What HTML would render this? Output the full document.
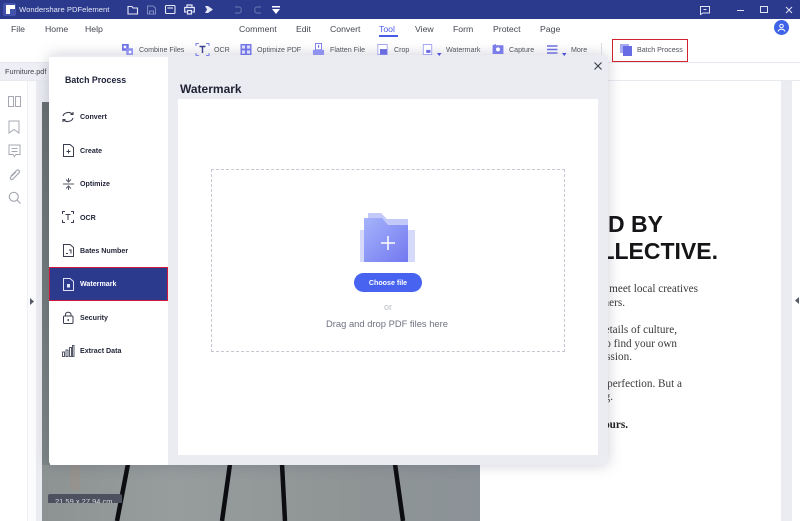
<!DOCTYPE html>
<html><head><meta charset="utf-8">
<style>
*{box-sizing:border-box}
html,body{margin:0;padding:0}
html{background:#fff}
body{width:800px;height:521px;overflow:hidden;position:relative;background:#fff;font-family:"Liberation Sans",sans-serif;color:#33363f;filter:blur(.25px)}
.a{position:absolute}
.t{position:absolute;white-space:nowrap;line-height:1;font-size:7.1px;color:#50535e}
.m{font-size:8.7px;color:#444751}
.s{position:absolute;left:80px;font-size:7.1px;font-weight:bold;color:#23263a;white-space:nowrap;line-height:1}
.h{font-weight:bold;font-size:23px;color:#151518;position:absolute;white-space:nowrap;line-height:1}
.p{font-family:"Liberation Serif",serif;font-size:11.2px;color:#3a3a3c;position:absolute;white-space:nowrap;line-height:1}
svg{position:absolute;overflow:visible}
</style></head><body>

<!-- background -->
<div class="a" style="left:0;top:80px;width:800px;height:441px;background:#fff"></div>
<div class="a" style="left:27px;top:80px;width:9px;height:441px;background:#fbfbfd;border-left:1px solid #eef0f4"></div>
<div class="a" style="left:36px;top:80px;width:6px;height:441px;background:#ebecf2"></div>
<div class="a" style="left:42px;top:102px;width:8px;height:363px;background:linear-gradient(#687070,#7d8585)"></div>
<div class="a" style="left:42px;top:80px;width:8px;height:22px;background:#ebecf2"></div>
<div class="a" style="left:781px;top:80px;width:11px;height:441px;background:#ebecf2"></div>

<!-- bottom photo -->
<div class="a" style="left:42px;top:465px;width:438px;height:56px;background:linear-gradient(90deg,#8d9292,#979d9d 30%,#8f9595 70%,#8b9298);overflow:hidden">
<svg width="438" height="56" style="left:0;top:0"><g stroke="#0c0d10" stroke-width="4.500" fill="none"><path d="M86 -1L75 56"/><path d="M188 -1L180 56"/><path d="M240 -1L243 56"/><path d="M353 -1L361 56"/></g><rect x="28" y="0" width="10" height="25" fill="#9b8f86" opacity=".5"/></svg>
</div>
<div class="a" style="left:48px;top:494px;width:74px;height:9px;background:#4d505f;border-radius:2px 2px 0 0;overflow:hidden"><span class="t" style="left:7px;top:4px;color:#d9dae0;font-size:7.5px">21.59 x 27.94 cm</span></div>

<!-- right page text (clipped under the modal edge) -->
<div class="h" style="right:137px;top:213px">D BY</div>
<div class="h" style="right:82px;top:240px">COLLECTIVE.</div>
<div class="p" style="right:102px;top:283.500px">tour, meet local creatives</div>
<div class="p" style="right:175px;top:297.500px">partners.</div>
<div class="p" style="right:123px;top:324.500px">the details of culture,</div>
<div class="p" style="right:123px;top:338.500px">and to find your own</div>
<div class="p" style="right:168px;top:351.500px">expression.</div>
<div class="p" style="right:118px;top:378.500px">for perfection. But a</div>
<div class="p" style="right:187px;top:392px">ing.</div>
<div class="p" style="right:172px;top:420px;font-weight:bold;color:#222">yours.</div>

<!-- handles -->
<svg style="left:30px;top:298px" width="5" height="7"><path d="M0 0L4 3.500L0 7z" fill="#555a66"/></svg>
<svg style="left:795px;top:297px" width="5" height="7"><path d="M4 0L0 3.500L4 7z" fill="#555a66"/></svg>

<!-- left rail icons -->
<svg style="left:8px;top:96px" width="14" height="12" fill="none" stroke="#a5a8b2"><rect x=".5" y=".5" width="5" height="10"/><rect x="7.500" y=".5" width="5" height="10"/></svg>
<svg style="left:8px;top:120px" width="13" height="14" fill="none" stroke="#a5a8b2"><path d="M1 1H11V13L6 9.500L1 13Z"/></svg>
<svg style="left:8px;top:144px" width="13" height="14" fill="none" stroke="#a5a8b2"><path d="M1 1H12V10.500H8L6.500 12.500L5 10.500H1Z"/><path d="M3.500 4.500H9.500M3.500 7.500H9.500"/></svg>
<svg style="left:8px;top:168px" width="13" height="14" fill="none" stroke="#a5a8b2" stroke-width="1.200"><path d="M3 8L8.500 2.500C10 1 12.500 3 11 4.800L5 11C3.500 12.500 1.300 10.500 2.800 9L8 3.800"/></svg>
<svg style="left:8px;top:191px" width="13" height="14" fill="none" stroke="#a5a8b2" stroke-width="1.200"><circle cx="5.800" cy="5.800" r="4.500"/><path d="M9 9L12.500 12.500"/></svg>

<!-- title bar -->
<div class="a" style="left:0;top:0;width:800px;height:18.500px;background:#2c3a8e"></div>
<div class="a" style="left:3px;top:3px;width:13px;height:13px;background:#4353ab;border-radius:2px"></div>
<svg style="left:5.500px;top:5px" width="9" height="9"><path d="M0 0H9V4H4V9H0Z" fill="#fff"/></svg>
<div class="t" style="left:19px;top:5.500px;color:#e4e7f5;font-size:7.650px">Wondershare PDFelement</div>
<svg style="left:127px;top:5px" width="12" height="10" fill="none" stroke="#e4e7f5" stroke-width="1.100"><path d="M1 1.500H5L6 3H10.500V9H1Z"/></svg>
<svg style="left:147px;top:5px" width="9" height="10" fill="none" stroke="#7f8ac2"><path d="M.5 1H6L8.500 3V9H.5Z"/><path d="M2.500 9V6H6.500V9"/></svg>
<svg style="left:165px;top:5px" width="11" height="9" fill="none" stroke="#e4e7f5" stroke-width="1.100"><rect x=".5" y=".5" width="9.500" height="8" rx="1"/><path d="M2.500 3H8"/></svg>
<svg style="left:184px;top:4px" width="11" height="11" fill="none" stroke="#e4e7f5" stroke-width="1.200"><path d="M3 3V1H8V3M2.500 8H.7V3.500H10.300V8H8.500"/><rect x="3.500" y="6.500" width="4" height="3.500"/></svg>
<svg style="left:205px;top:6px" width="8" height="8" fill="#e4e7f5"><path d="M0 0L3 0L8 3.500L3 7H0L2 3.500Z"/></svg>
<svg style="left:234px;top:6px" width="8" height="8" fill="none" stroke="#6a76b5"><path d="M1 1H5C8 1 8 7 5 7H1"/></svg>
<svg style="left:254px;top:6px" width="8" height="8" fill="none" stroke="#6a76b5"><path d="M7 1H3C0 1 0 7 3 7H7"/></svg>
<svg style="left:272px;top:6px" width="8" height="8" fill="#fff"><rect x="0" y="0" width="8" height="1.500"/><path d="M0 3H8L4 8Z"/></svg>
<svg style="left:700px;top:6px" width="10" height="9" fill="none" stroke="#dfe3f2"><path d="M.5 .5H9.500V7H3L.5 8.500Z"/><path d="M3.500 3.500H6.500"/></svg>
<div class="a" style="left:737px;top:9.500px;width:7px;height:1px;background:#dfe3f2"></div>
<div class="a" style="left:760px;top:6px;width:8px;height:7px;border:1px solid #dfe3f2"></div>
<svg style="left:784.500px;top:6px" width="8" height="8" stroke="#dfe3f2"><path d="M1 1L7 7M7 1L1 7"/></svg>

<!-- menu -->
<div class="t m" style="left:11px;top:25px">File</div>
<div class="t m" style="left:45px;top:25px">Home</div>
<div class="t m" style="left:85px;top:25px">Help</div>
<div class="t m" style="left:239px;top:25px">Comment</div>
<div class="t m" style="left:296px;top:25px">Edit</div>
<div class="t m" style="left:330px;top:25px">Convert</div>
<div class="t m" style="left:379px;top:25px;color:#4a5be8">Tool</div>
<div class="a" style="left:379px;top:35px;width:19px;height:1.500px;background:#4a5be8"></div>
<div class="t m" style="left:415px;top:25px">View</div>
<div class="t m" style="left:453px;top:25px">Form</div>
<div class="t m" style="left:493px;top:25px">Protect</div>
<div class="t m" style="left:540px;top:25px">Page</div>
<div class="a" style="left:774px;top:20px;width:15px;height:15px;border-radius:50%;background:#3f63e6"></div>
<svg style="left:777px;top:23px" width="9" height="9" fill="none" stroke="#fff"><circle cx="4.500" cy="3" r="1.800"/><path d="M1 8.500C2 5.500 7 5.500 8 8.500"/></svg>

<!-- tab bar -->
<div class="a" style="left:0;top:62px;width:800px;height:1px;background:#e6e7ee"></div>
<div class="a" style="left:0;top:63px;width:49px;height:18px;background:#eeeff4"></div>
<div class="a" style="left:0;top:80px;width:800px;height:1px;background:#e9eaf0"></div>
<div class="t" style="left:5px;top:68px;font-size:7.300px;color:#41444e">Furniture.pdf</div>

<!-- modal -->
<div class="a" style="left:49px;top:55px;width:559px;height:410px;background:#ebecf2;border-radius:4px;box-shadow:0 0 14px rgba(60,65,90,.25);overflow:hidden">
  <div class="a" style="left:0;top:1.500px;width:119px;height:409px;background:#fff"></div>
</div>

<!-- toolbar (painted above the modal edge) -->
<svg style="left:122px;top:44px" width="11" height="11" viewBox="0 0 13 13"><rect x="0" y="0" width="8" height="8" fill="#7073e6"/><rect x="5" y="5" width="8" height="8" fill="#8f92ee"/><rect x="2" y="2" width="3" height="3" fill="#fff"/><rect x="8" y="8" width="3" height="3" fill="#fff"/></svg>
<div class="t" style="left:139px;top:47px">Combine Files</div>
<svg style="left:196px;top:43px" width="13" height="13" fill="none" stroke="#8084ea" stroke-width="1.100"><path d="M0 3V.500H3M10 .500H13V3M0 10V12.500H3M10 12.500H13V10"/><path d="M3.500 3.500H9.500M6.500 3.500V10" stroke="#3b3f90" stroke-width="1.400"/></svg>
<div class="t" style="left:214px;top:47px">OCR</div>
<svg style="left:240px;top:44px" width="12" height="11" viewBox="0 0 12 12"><rect width="12" height="12" fill="#7073e6"/><g fill="#dcdcfa"><rect x="1.500" y="1.500" width="3.500" height="3.500"/><rect x="7" y="1.500" width="3.500" height="3.500"/><rect x="1.500" y="7" width="3.500" height="3.500"/><rect x="7" y="7" width="3.500" height="3.500"/></g></svg>
<div class="t" style="left:257px;top:47px">Optimize PDF</div>
<svg style="left:312px;top:43px" width="13" height="12" viewBox="0 0 13 14"><path d="M3 .500H10V8H3Z" fill="#fff" stroke="#7073e6"/><rect x="6" y="2.500" width="1.200" height="3" fill="#5058d8"/><rect x="0" y="8" width="13" height="6" fill="#8f92ee"/></svg>
<div class="t" style="left:330px;top:47px">Flatten File</div>
<svg style="left:377px;top:44px" width="11" height="11" viewBox="0 0 12 13"><path d="M.5 .500H11.500V12.500H.5Z" fill="#fff" stroke="#9a9df0"/><rect x="3" y="6" width="8.500" height="6.500" fill="#6a6de0"/></svg>
<div class="t" style="left:394px;top:47px">Crop</div>
<svg style="left:422px;top:44px" width="11" height="11" viewBox="0 0 11 13"><path d="M.5 .500H10.500V12.500H.5Z" fill="#fff" stroke="#9a9df0"/><rect x="4" y="7" width="5" height="3.500" fill="#6a6de0"/></svg>
<svg style="left:437px;top:53px" width="5" height="3"><path d="M0 0H4.500L2.250 3Z" fill="#4a50d8"/></svg>
<div class="t" style="left:446px;top:47px">Watermark</div>
<svg style="left:492px;top:44px" width="12" height="10" viewBox="0 0 13 12"><path d="M0 1.500L4 0V1.500H13V12H0Z" fill="#7a7de8"/><circle cx="6.500" cy="6.500" r="2.400" fill="#fff"/></svg>
<div class="t" style="left:509px;top:47px">Capture</div>
<svg style="left:547px;top:45px" width="11" height="9" fill="none" stroke="#6a6fe0" stroke-width="1.500"><path d="M0 1H10.500M0 4.500H10.500M0 8H10.500"/></svg>
<svg style="left:562px;top:53px" width="5" height="3"><path d="M0 0H4.500L2.250 3Z" fill="#4a50d8"/></svg>
<div class="t" style="left:571px;top:47px">More</div>
<div class="a" style="left:601px;top:43px;width:1px;height:12px;background:#d9dbe3"></div>
<div class="a" style="left:612px;top:39px;width:76px;height:23px;border:1.500px solid #d1232e"></div>
<svg style="left:620px;top:44px" width="12" height="12"><rect x="0" y="0" width="9" height="9" fill="#a9abf0"/><rect x="3" y="2" width="9" height="10" fill="#686ce4"/></svg>
<div class="t" style="left:637px;top:47px">Batch Process</div>

<div class="t" style="left:65px;top:75.500px;font-size:8.800px;font-weight:bold;color:#20233a">Batch Process</div>
<div class="t" style="left:180px;top:83px;font-size:12px;font-weight:bold;color:#1f2233">Watermark</div>
<svg style="left:594px;top:62px" width="8" height="8" stroke="#3a3d48" stroke-width="1.100"><path d="M.5 .500L7.500 7.500M7.500 .500L.5 7.500"/></svg>

<!-- sidebar -->
<svg style="left:62px;top:111px" width="12" height="12" fill="none" stroke="#3a3d4e" stroke-width="1.100"><path d="M1 5C2 1.500 8 0 10.500 3.500M11 7C10 10.500 4 12 1.500 8.500"/><path d="M8.500 3.500H11V1M3.500 8.500H1V11"/></svg>
<div class="s" style="top:114px">Convert</div>
<svg style="left:63px;top:144px" width="11" height="13" fill="none" stroke="#3a3d4e"><path d="M.5 .500H7L10.500 3.500V12.500H.5Z"/><path d="M3.500 7.500H7.500M5.500 5.500V9.500"/></svg>
<div class="s" style="top:148px">Create</div>
<svg style="left:63px;top:178px" width="11" height="12" fill="none" stroke="#555869"><path d="M0 6H11M3 1.500L5.500 4L8 1.500M3 10.500L5.500 8L8 10.500M5.500 0V4M5.500 8V12"/></svg>
<div class="s" style="top:181px">Optimize</div>
<svg style="left:62px;top:211px" width="12" height="12" fill="none" stroke="#3a3d4e"><path d="M.5 3V.500H3M9 .500H11.500V3M.5 9V11.500H3M9 11.500H11.500V9"/><path d="M3.500 3.500H8.500M6 3.500V9"/></svg>
<div class="s" style="top:215px">OCR</div>
<svg style="left:63px;top:244px" width="11" height="13" fill="none" stroke="#3a3d4e"><path d="M.5 .500H7L10.500 3.500V12.500H.5Z"/><path d="M3 9.500H5M6 6H8V9.500"/></svg>
<div class="s" style="top:248px">Bates Number</div>
<div class="a" style="left:49px;top:267px;width:119px;height:34px;background:#2c3a8e;border:1.500px solid #d1183a"></div>
<svg style="left:63px;top:278px" width="11" height="13" fill="none" stroke="#dfe3f5"><path d="M.5 .500H7L10.500 3.500V12.500H.5Z"/><rect x="4" y="6" width="3" height="3.500" fill="#dfe3f5" stroke="none"/></svg>
<div class="s" style="top:281px;color:#fff">Watermark</div>
<svg style="left:63px;top:311px" width="11" height="13" fill="none" stroke="#3a3d4e"><rect x=".5" y="5" width="9.500" height="7.500" rx="1"/><path d="M2.500 5V3.500C2.500 .5 8 .5 8 3.500V5"/><path d="M5.200 8V10" stroke-width="1.300"/></svg>
<div class="s" style="top:315px">Security</div>
<svg style="left:62px;top:345px" width="12" height="12" fill="#fff" stroke="#555869"><rect x=".5" y="7" width="2" height="4.500"/><rect x="4" y="5" width="2" height="6.500"/><rect x="7.500" y="2.500" width="2" height="9"/><rect x="10.500" y=".5" width="1.500" height="11"/></svg>
<div class="s" style="top:348px">Extract Data</div>

<!-- content -->
<div class="a" style="left:178px;top:99px;width:420px;height:356px;background:#fff"></div>
<div class="a" style="left:211px;top:169px;width:354px;height:183px;border:1px dashed #c6c8d1"></div>
<svg style="left:360px;top:213px" width="56" height="50">
<defs><linearGradient id="g" x1="0" y1="0" x2="1" y2="1"><stop offset="0" stop-color="#a5b4fb"/><stop offset="1" stop-color="#7277ef"/></linearGradient></defs>
<rect x="0" y="17" width="55" height="32" fill="#d5dafb"/>
<path d="M8 0H21L27 6H48V20H8Z" fill="#c3c9f8"/>
<path d="M4 5H22L28 12H48V49H4Z" fill="url(#g)"/>
<path d="M28 23V37M21 30H35" stroke="#fff" stroke-width="1.500"/>
</svg>
<div class="a" style="left:354px;top:273px;width:68px;height:19px;border-radius:10px;background:#4763f0"></div>
<div class="t" style="left:354px;top:280px;width:68px;text-align:center;font-size:7.100px;font-weight:bold;color:#fff">Choose file</div>
<div class="t" style="left:354px;top:303px;width:68px;text-align:center;font-size:9px;color:#b9bcc6">or</div>
<div class="t" style="left:287px;top:319px;width:200px;text-align:center;font-size:9.400px;color:#6e7280">Drag and drop PDF files here</div>

</body></html>
